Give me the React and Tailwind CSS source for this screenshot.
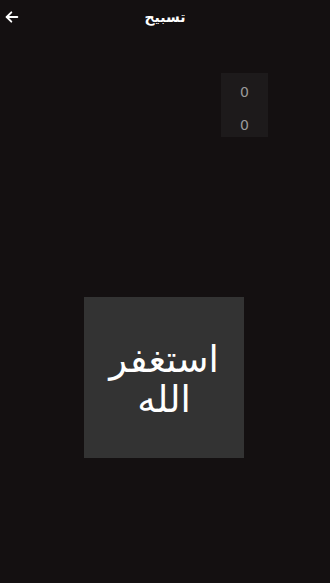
import React from 'react';

const App = () => {
  return (
    <div className="w-[330px] h-[583px] bg-[#141011] flex flex-col overflow-hidden" style={{ fontFamily: '"DejaVu Sans", "Noto Sans", sans-serif' }}>
      {/* Header */}
      <div className="relative h-[34px] flex items-center justify-center">
        <button className="absolute left-[4px] top-[9px] text-white">
          <svg width="16" height="16" viewBox="0 0 24 24" fill="none" stroke="currentColor" strokeWidth="2.8" strokeLinecap="round" strokeLinejoin="round">
            <path d="M20 12H4" />
            <path d="M11 5l-7 7 7 7" />
          </svg>
        </button>
        <h1 dir="rtl" className="text-white text-[14px] font-bold">تسبيح</h1>
      </div>

      {/* Counters */}
      <div className="flex justify-end pr-[62px] mt-[39px]">
        <div className="w-[47px] h-[64px] pt-[6px] bg-[#1d1a1b] flex flex-col items-center justify-center gap-[19px] text-[#9a9a9a] text-[14px]">
          <span className="leading-none">0</span>
          <span className="leading-none">0</span>
        </div>
      </div>

      {/* Main button */}
      <div className="flex justify-center mt-[160px] pr-[2px]">
        <button className="w-[160px] h-[161px] pt-[5px] bg-[#333333] flex items-center justify-center">
          <span dir="rtl" className="text-white text-[37px] leading-[40px] text-center">استغفر<br />الله</span>
        </button>
      </div>
    </div>
  );
};

export default App;
